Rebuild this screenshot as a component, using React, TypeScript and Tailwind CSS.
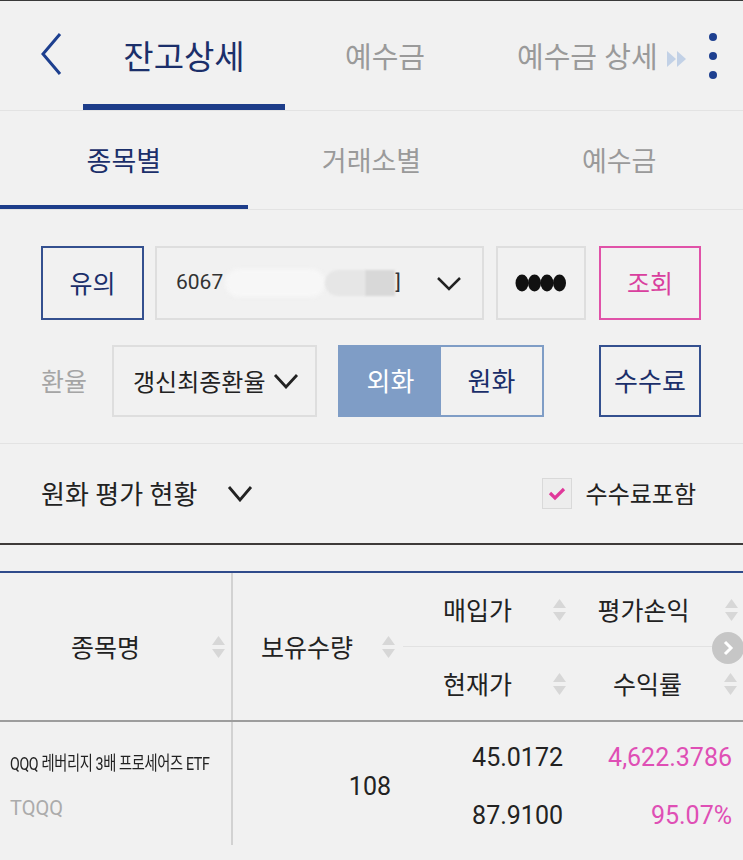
import React from 'react';

const SortArrows: React.FC = () => (
  <svg width="15" height="24" viewBox="0 0 15 24" className="shrink-0">
    <path d="M7.5 1 L14 10 H1 Z" fill="#d7d7d7" />
    <path d="M1 14 H14 L7.5 23 Z" fill="#d7d7d7" />
  </svg>
);

const Chevron: React.FC<{ w?: number; h?: number; stroke?: number }> = ({ w = 24, h = 14, stroke = 2.5 }) => (
  <svg width={w} height={h} viewBox={`0 0 ${w} ${h}`} className="shrink-0">
    <path d={`M2 2 L${w / 2} ${h - 2} L${w - 2} 2`} fill="none" stroke="#222" strokeWidth={stroke} />
  </svg>
);

const App: React.FC = () => {
  return (
    <div className="w-[743px] h-[860px] overflow-hidden bg-[#f1f1f1] border-t border-[#3a3a3a] font-[Roboto,'Noto_Sans_CJK_KR',sans-serif]">
      {/* Top tabs */}
      <div className="h-[110px] flex items-stretch border-b border-[#e3e3e3]">
        <div className="w-[83px] flex items-center">
          <svg width="24" height="44" viewBox="0 0 24 44" className="ml-[39px] mb-[4px]">
            <path d="M21 2 L4 22 L21 42" fill="none" stroke="#1d3f8f" strokeWidth="3" />
          </svg>
        </div>
        <div className="w-[202px] flex flex-col">
          <div className="flex-1 flex items-center justify-center pt-[10px] text-[33px] text-[#1b2f6a]">잔고상세</div>
          <div className="h-[6px] bg-[#1d3d8a]" />
        </div>
        <div className="w-[200px] flex items-center justify-center pt-[6px] text-[29px] text-[#9a9a9a]">예수금</div>
        <div className="flex-1 flex items-center pl-[32px] pt-[6px] text-[29px] text-[#9a9a9a]">
          <span className="whitespace-nowrap">예수금 상세</span>
          <svg width="22" height="20" viewBox="0 0 22 20" className="ml-[8px] shrink-0">
            <path d="M1 2 L10 10 L1 18 Z" fill="#c2d1e6" />
            <path d="M11 2 L20 10 L11 18 Z" fill="#c2d1e6" />
          </svg>
          <svg width="10" height="48" viewBox="0 0 10 48" className="ml-[20px] mb-[6px] shrink-0">
            <circle cx="5" cy="5" r="4" fill="#1d3f8f" />
            <circle cx="5" cy="24" r="4" fill="#1d3f8f" />
            <circle cx="5" cy="43" r="4" fill="#1d3f8f" />
          </svg>
        </div>
      </div>

      {/* Sub tabs */}
      <div className="h-[99px] grid grid-cols-3 border-b border-[#e3e3e3]">
        <div className="flex flex-col">
          <div className="flex-1 flex items-center justify-center pt-[8px] text-[27px] text-[#1b2f6a]">종목별</div>
          <div className="h-[4px] bg-[#1d3d8a]" />
        </div>
        <div className="flex items-center justify-center pt-[4px] text-[27px] text-[#9a9a9a]">거래소별</div>
        <div className="flex items-center justify-center pt-[4px] text-[27px] text-[#9a9a9a]">예수금</div>
      </div>

      {/* Controls */}
      <div className="h-[234px] pt-[36px] pl-[41px] pr-[42px] border-b border-[#e3e3e3]">
        <div className="flex h-[74px]">
          <div className="w-[103px] border-2 border-[#34508f] flex items-center justify-center pt-[3px] text-[25px] text-[#1b2f6a]">유의</div>
          <div className="ml-[11px] w-[329px] border-2 border-[#dedede] flex items-center pl-[19px] pr-[20px]">
            <span className="text-[21px] text-[#333]">6067</span>
            <div className="ml-[2px] h-[28px] w-[100px] bg-[#f7f7f7] rounded-full blur-[2px]" />
            <div className="h-[26px] w-[40px] bg-[#e6e6e6] rounded-l-full blur-[1px]" />
            <div className="h-[26px] w-[30px] bg-[#d8d8d8] blur-[1px]" />
            <span className="text-[21px] text-[#333]">]</span>
            <div className="ml-auto"><Chevron w={26} h={15} stroke={2.5} /></div>
          </div>
          <div className="ml-[12px] w-[90px] border-2 border-[#dedede] flex items-center justify-center">
            <svg width="52" height="18" viewBox="0 0 52 18">
              <ellipse cx="7" cy="9" rx="6.5" ry="8.5" fill="#111" />
              <ellipse cx="19.5" cy="9" rx="6.5" ry="8.5" fill="#111" />
              <ellipse cx="32" cy="9" rx="6.5" ry="8.5" fill="#111" />
              <ellipse cx="44.5" cy="9" rx="6.5" ry="8.5" fill="#111" />
            </svg>
          </div>
          <div className="ml-[13px] w-[102px] border-2 border-[#e052a8] flex items-center justify-center pt-[3px] text-[25px] text-[#d93f9e]">조회</div>
        </div>
        <div className="flex h-[72px] mt-[25px] items-stretch">
          <div className="w-[71px] flex items-center pt-[3px] text-[25px] text-[#a5a5a5]">환율</div>
          <div className="w-[205px] border-2 border-[#dedede] flex items-center pl-[19px] pt-[3px] text-[24px] text-[#222]">
            <span className="whitespace-nowrap">갱신최종환율</span>
            <div className="ml-[8px] pb-[3px]"><Chevron w={26} h={16} stroke={2.8} /></div>
          </div>
          <div className="ml-[21px] w-[206px] flex border-2 border-[#7f9dc6]">
            <div className="flex-1 bg-[#7f9dc6] flex items-center justify-center pt-[3px] text-[26px] text-white">외화</div>
            <div className="flex-1 flex items-center justify-center pt-[3px] text-[26px] text-[#1b2f6a]">원화</div>
          </div>
          <div className="ml-auto w-[102px] border-2 border-[#34508f] flex items-center justify-center pt-[3px] text-[26px] text-[#1b2f6a]">수수료</div>
        </div>
      </div>

      {/* Valuation section */}
      <div className="h-[101px] flex items-center pl-[41px] pr-[47px] border-b-2 border-[#3e3a39]">
        <span className="pt-[3px] text-[26px] text-[#222] whitespace-nowrap">원화 평가 현황</span>
        <div className="ml-[30px]"><Chevron w={26} h={17} stroke={2.8} /></div>
        <div className="ml-auto flex items-center">
          <div className="w-[30px] h-[31px] border border-[#d9d9d9] bg-[#ededed] flex items-center justify-center">
            <svg width="18" height="14" viewBox="0 0 18 14">
              <path d="M2 6 L7 11 L16 2" fill="none" stroke="#e0389a" strokeWidth="3.2" />
            </svg>
          </div>
          <span className="ml-[14px] pt-[3px] text-[24px] text-[#222] whitespace-nowrap">수수료포함</span>
        </div>
      </div>

      {/* Table */}
      <div className="mt-[26px] border-t-2 border-[#2f4b8b]">
        <div className="relative h-[149px] flex border-b-2 border-[#9d9d9d]">
          <div className="w-[233px] border-r-2 border-[#d2d2d2] flex items-center pr-[5px]">
            <span className="flex-1 text-center pt-[4px] text-[25px] text-[#222]">종목명</span>
            <SortArrows />
          </div>
          <div className="w-[170px] flex items-center pr-[7px]">
            <span className="flex-1 text-center pt-[4px] text-[25px] text-[#222]">보유수량</span>
            <SortArrows />
          </div>
          <div className="flex-1 flex flex-col">
            <div className="flex-1 flex border-b border-[#e2e2e2] mr-[28px]">
              <div className="w-[169px] flex items-center pr-[5px]">
                <span className="flex-1 text-center pt-[4px] text-[25px] text-[#222]">매입가</span>
                <SortArrows />
              </div>
              <div className="flex-1 flex items-center">
                <span className="flex-1 text-center pt-[4px] text-[25px] text-[#222] whitespace-nowrap">평가손익</span>
              </div>
            </div>
            <div className="flex-1 flex">
              <div className="w-[169px] flex items-center pr-[5px]">
                <span className="flex-1 text-center pt-[4px] text-[25px] text-[#222]">현재가</span>
                <SortArrows />
              </div>
              <div className="flex-1 flex items-center pr-[5px]">
                <span className="flex-1 text-center pt-[4px] text-[25px] text-[#222]">수익률</span>
                <SortArrows />
              </div>
            </div>
          </div>
          <div className="absolute left-[724px] top-[25px]"><SortArrows /></div>
          <div className="absolute left-[712px] top-[59px] w-[32px] h-[32px] rounded-full bg-[#c6c6c6] flex items-center justify-center">
            <svg width="12" height="16" viewBox="0 0 12 16">
              <path d="M3 2 L9 8 L3 14" fill="none" stroke="#fff" strokeWidth="3" />
            </svg>
          </div>
        </div>

        <div className="h-[123px] flex">
          <div className="w-[233px] border-r-2 border-[#d2d2d2] flex flex-col justify-center pl-[10px] pt-[6px]">
            <div className="text-[19px] text-[#222] whitespace-nowrap origin-left scale-x-[0.75] tracking-[-0.5px]">QQQ 레버리지 3배 프로세어즈 ETF</div>
            <div className="mt-[14px] text-[20px] text-[#ababab]">TQQQ</div>
          </div>
          <div className="w-[170px] flex items-center justify-end pr-[12px] pt-[6px] text-[25px] text-[#222]">108</div>
          <div className="w-[169px] flex flex-col justify-around items-end pr-[9px] pt-[6px] text-[25px] text-[#222]">
            <span>45.0172</span>
            <span>87.9100</span>
          </div>
          <div className="flex-1 flex flex-col justify-around items-end pr-[11px] pt-[6px] text-[25px] text-[#df4fb5]">
            <span>4,622.3786</span>
            <span>95.07%</span>
          </div>
        </div>
      </div>
    </div>
  );
};

export default App;
